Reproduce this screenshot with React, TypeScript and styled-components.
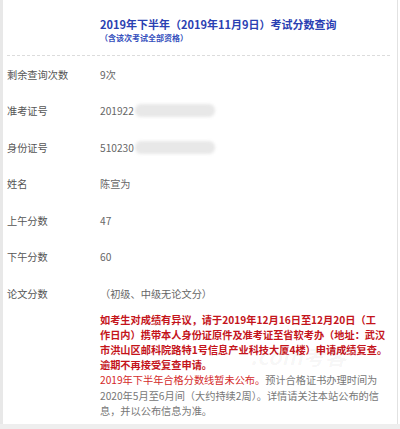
import * as React from 'react'
import styled, { createGlobalStyle } from 'styled-components'

const GlobalStyle = createGlobalStyle`
  html, body {
    margin: 0;
    padding: 0;
    background: #ffffff;
  }
  body {
    font-family: "Noto Sans CJK SC", "Noto Sans", sans-serif;
  }
`

interface Row {
  label: string
  value: string
  masked?: boolean
}

const rows: Row[] = [
  { label: '剩余查询次数', value: '9次' },
  { label: '准考证号', value: '201922', masked: true },
  { label: '身份证号', value: '510230', masked: true },
  { label: '姓名', value: '陈宣为' },
  { label: '上午分数', value: '47' },
  { label: '下午分数', value: '60' },
  { label: '论文分数', value: '（初级、中级无论文分）' },
]

const App: React.FC = () => (
  <>
    <GlobalStyle />
    <Page>
      <Panel>
        <Header>
          <Title>2019年下半年（2019年11月9日）考试分数查询</Title>
          <Subtitle>（含该次考试全部资格）</Subtitle>
        </Header>
        {rows.map((r) => (
          <InfoRow key={r.label}>
            <Label>{r.label}</Label>
            <Value>
              {r.value}
              {r.masked && <Mask />}
            </Value>
          </InfoRow>
        ))}
        <NoticeRow>
          <Notice>
            <Line $tone="alert">如考生对成绩有异议，请于2019年12月16日至12月20日（工</Line>
            <Line $tone="alert">作日内）携带本人身份证原件及准考证至省软考办（地址：武汉</Line>
            <Line $tone="alert">市洪山区邮科院路特1号信息产业科技大厦4楼）申请成绩复查。</Line>
            <Line $tone="alert">逾期不再接受复查申请。</Line>
            <Line $tone="plain">
              <Red>2019年下半年合格分数线暂未公布。</Red>预计合格证书办理时间为
            </Line>
            <Line $tone="plain">2020年5月至6月间（大约持续2周）。详情请关注本站公布的信</Line>
            <Line $tone="plain">息，并以公布信息为准。</Line>
            <Watermark>.com考客</Watermark>
          </Notice>
        </NoticeRow>
      </Panel>
      <Footer />
    </Page>
  </>
)

const Page = styled.div`
  width: 400px;
  height: 429px;
  display: flex;
  flex-direction: column;
  background: #ffffff;
  overflow: hidden;
`

const Panel = styled.div`
  flex: 0 0 424px;
  box-sizing: border-box;
  width: 398px;
  border-left: 3px solid #e8e8e8;
  border-right: 1px solid #e2e2e2;
  padding: 0 4px;
`

const Footer = styled.div`
  flex: 1;
  background: #eeeeee;
`

const Header = styled.div`
  height: 56px;
  box-sizing: border-box;
  padding: 17px 0 0 93px;
  border-bottom: 1px dashed #dcdcdc;
  margin-right: 3px;
`

const Title = styled.div`
  color: #2a40b2;
  font-size: 11px;
  font-weight: 700;
  line-height: 14px;
  white-space: nowrap;
`

const Subtitle = styled.div`
  color: #3550bd;
  font-size: 8px;
  font-weight: 700;
  line-height: 12px;
  margin-top: 1px;
`

const InfoRow = styled.div`
  display: flex;
  align-items: center;
  padding: 10.75px 0;
  font-size: 10.2px;
  line-height: 15px;
`

const Label = styled.div`
  flex: 0 0 93px;
  color: #555555;
`

const Value = styled.div`
  display: flex;
  align-items: center;
  color: #666666;
  white-space: nowrap;
`

const Mask = styled.span`
  display: inline-block;
  width: 80px;
  height: 13px;
  margin-left: 1px;
  border-radius: 6px;
  background: #e8e8e8;
  filter: blur(1.5px);
`

const NoticeRow = styled.div`
  display: flex;
  padding-left: 93px;
`

const Notice = styled.div`
  position: relative;
  font-size: 10.2px;
  line-height: 15.2px;
`

const Line = styled.div<{ $tone: 'alert' | 'plain' }>`
  white-space: nowrap;
  color: ${(p) => (p.$tone === 'alert' ? '#c4141b' : '#777777')};
  font-weight: ${(p) => (p.$tone === 'alert' ? 700 : 400)};
`

const Red = styled.span`
  color: #d42a2a;
`

const Watermark = styled.div`
  position: absolute;
  left: 150px;
  top: 36px;
  font-size: 22px;
  font-weight: 700;
  font-style: italic;
  color: rgba(0, 0, 0, 0.04);
  pointer-events: none;
  white-space: nowrap;
`

export default App
